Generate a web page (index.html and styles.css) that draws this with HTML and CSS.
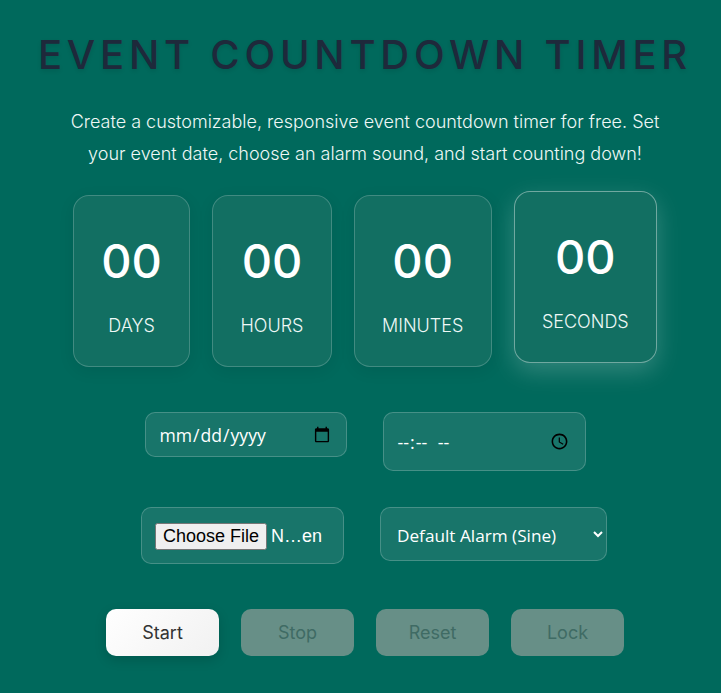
FILE: index.html
```html
<!doctype html>
<html>
  <head>
    <meta charset="utf-8">
    <title>Event Countdown Timer</title>
    <link rel="stylesheet" href="styles.css">
  </head>
  <body>
    <div class="container">
      <h1 class="title">EVENT COUNTDOWN TIMER</h1>
      <p class="intro">Create a customizable, responsive event countdown timer for free. Set your event date, choose an alarm sound, and start counting down!</p>
      <div class="countdown">
        <div class="unit">
          <span class="value">00</span>
          <span class="label">DAYS</span>
        </div>
        <div class="unit">
          <span class="value">00</span>
          <span class="label">HOURS</span>
        </div>
        <div class="unit">
          <span class="value">00</span>
          <span class="label">MINUTES</span>
        </div>
        <div class="unit unit-hover">
          <span class="value">00</span>
          <span class="label">SECONDS</span>
        </div>
      </div>
      <div class="row row-date">
        <input type="date" class="field field-date">
        <input type="time" class="field field-time">
      </div>
      <div class="row row-alarm">
        <input type="file" class="field field-file">
        <select class="field field-select">
          <option>Default Alarm (Sine)</option>
        </select>
      </div>
      <div class="buttons">
        <button class="btn btn-start">Start</button>
        <button class="btn" disabled>Stop</button>
        <button class="btn" disabled>Reset</button>
        <button class="btn" disabled>Lock</button>
      </div>
    </div>
  </body>
</html>
```

FILE: styles.css
```css
html {
  overflow: hidden;
}
body {
  margin: 0;
  background-color: #00695c;
  font-family: 'Inter', 'Liberation Sans', sans-serif;
  color: #eef8f6;
}
.container {
  width: 730px;
  height: 693px;
  padding-top: 32px;
  box-sizing: border-box;
}
.title {
  margin: 0;
  text-align: center;
  font-size: 40px;
  line-height: 46px;
  font-weight: 550;
  letter-spacing: 4.8px;
  color: #1e293b;
  text-shadow: 0 2px 4px rgba(0, 0, 0, 0.1);
}
.intro {
  width: 600px;
  margin: 28px auto 0;
  text-align: center;
  font-size: 18px;
  line-height: 32px;
  font-weight: 300;
}
.countdown {
  display: flex;
  justify-content: center;
  gap: 22px;
  margin-top: 25px;
}
.unit {
  display: flex;
  flex-direction: column;
  align-items: center;
  min-width: 117px;
  height: 172px;
  padding: 0 27.25px;
  box-sizing: border-box;
  background-color: #126f62;
  border: 1px solid rgba(255, 255, 255, 0.2);
  border-radius: 16px;
  box-shadow: 0 4px 16px rgba(0, 0, 0, 0.08);
}
.unit-hover {
  transform: translateY(-4px);
  border-color: rgba(255, 255, 255, 0.4);
  box-shadow: 0 8px 24px rgba(255, 255, 255, 0.2);
}
.value {
  margin-top: 36px;
  font-size: 47px;
  line-height: 58px;
  font-weight: 450;
  color: #fff;
}
.label {
  margin-top: 25px;
  font-size: 18px;
  line-height: 22px;
  font-weight: 300;
}
.row {
  display: flex;
  justify-content: center;
  align-items: flex-start;
  gap: 36px;
}
.row-date {
  margin-top: 45px;
}
.row-alarm {
  margin-top: 36px;
  padding-left: 18px;
}
.field {
  box-sizing: border-box;
  margin: 0;
  padding: 0 13px;
  background-color: #18756a;
  border: 1px solid rgba(255, 255, 255, 0.2);
  border-radius: 10px;
  color: #fff;
  font-family: 'Open Sans', sans-serif;
  font-size: 17.6px;
}
.field-date {
  width: 202px;
  height: 45px;
}
.field-time {
  width: 203px;
  height: 59px;
  font-size: 18px;
  letter-spacing: 2px;
}
.field-time::-webkit-datetime-edit-ampm-field {
  margin-left: 6px;
}
.field-file {
  width: 203px;
  height: 57px;
  padding: 2px 12px 0 13px;
  font-family: 'Liberation Sans', sans-serif;
  font-size: 18px;
  line-height: 53px;
}
.field-select {
  width: 227px;
  height: 54px;
  padding: 2px 0 0 12px;
  font-size: 17.2px;
}
.field-select option {
  color: #000;
}
.buttons {
  display: flex;
  justify-content: center;
  gap: 22px;
  margin-top: 45px;
}
.btn {
  width: 113px;
  height: 47px;
  border: 0;
  border-radius: 10px;
  background: linear-gradient(135deg, #ffffff, #f1f1f1);
  color: #333;
  font-family: 'Inter', sans-serif;
  font-size: 18px;
  font-weight: 400;
}
.btn:disabled {
  background: #678f87;
  color: #3f6b64;
}
.btn-start {
  box-shadow: 0 4px 12px rgba(0, 0, 0, 0.15);
}
```
